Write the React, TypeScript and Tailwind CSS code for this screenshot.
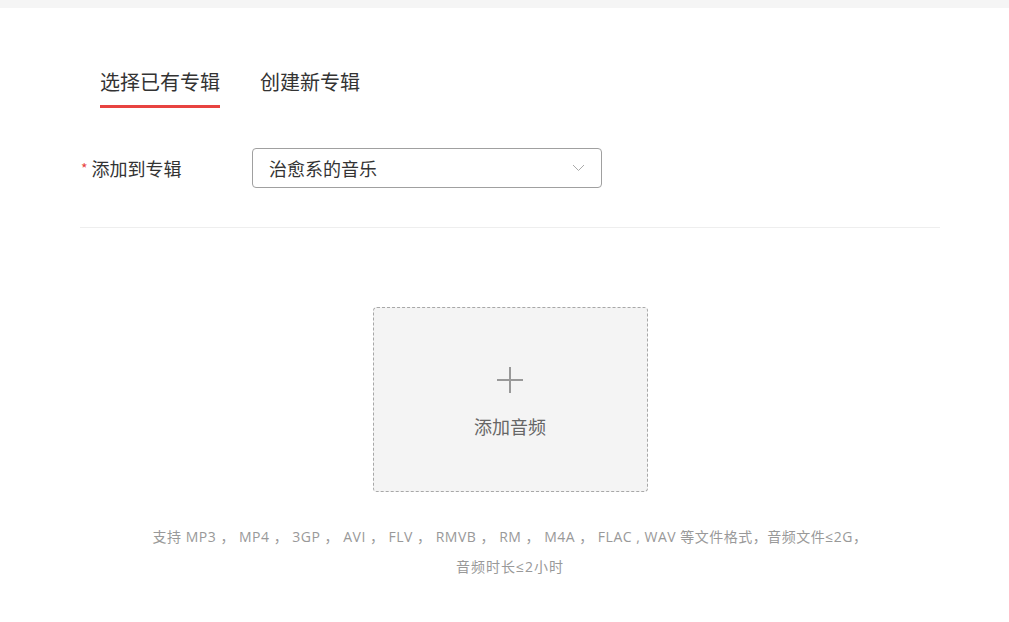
import React, { useState } from "react";

const font = "font-['Microsoft_YaHei','Noto_Sans_CJK_SC',sans-serif]";

export default function App() {
  const [tab, setTab] = useState(0);
  const tabs = ["选择已有专辑", "创建新专辑"];

  return (
    <div className={`${font} min-h-[622px] bg-white text-[#333]`}>
      <div className="h-2 bg-[#f5f5f5]" />
      <div className="w-[860px] ml-20">
        {/* tabs */}
        <div className="flex gap-10 pl-5 mt-[60px]">
          {tabs.map((t, i) => (
            <button key={t} onClick={() => setTab(i)} className="flex flex-col items-stretch">
              <span className="text-[20px] leading-[28px]">{t}</span>
              <span className={i === tab ? "mt-[9px] h-[3px] bg-[#e84340]" : "mt-[9px] h-[3px]"} />
            </button>
          ))}
        </div>

        {/* album select */}
        <div className="flex items-center mt-10 h-10">
          <div className="w-[172px] flex items-center text-[18px]">
            <span className="text-[#e84340] text-[14px] mr-1 ml-px">*</span>
            添加到专辑
          </div>
          <div className="w-[350px] h-10 border border-[#a0a0a0] rounded flex items-center justify-between pl-4 pr-4 text-[18px]">
            <span>治愈系的音乐</span>
            <svg width="13" height="8" viewBox="0 0 13 8" fill="none">
              <path d="M1 1l5.5 5.5L12 1" stroke="#aaa" strokeWidth="1" />
            </svg>
          </div>
        </div>

        <div className="mt-[39px] border-t border-[#eee]" />

        {/* upload */}
        <div className="flex flex-col items-center">
          <div className="mt-[79px] w-[275px] h-[185px] bg-[#f4f4f4] border border-dashed border-[#a8a8a8] rounded flex flex-col items-center">
            <svg className="mt-[59px]" width="26" height="26" viewBox="0 0 26 26">
              <path d="M13 0v26M0 13h26" stroke="#999" strokeWidth="2" />
            </svg>
            <div className="mt-[20px] text-[18px] text-[#666] leading-[26px]">添加音频</div>
          </div>
          <div className="mt-[30px] font-['Open_Sans','Noto_Sans_CJK_SC',sans-serif] text-[14px] leading-[30px] tracking-[0.5px] text-[#999] text-center whitespace-pre">
            {"支持 MP3 ， MP4 ， 3GP ， AVI ， FLV ， RMVB ， RM ， M4A ， FLAC , WAV 等文件格式，音频文件≤2G，"}
            <br />
            <span className="tracking-[1px]">{"音频时长≤2小时"}</span>
          </div>
        </div>
      </div>
    </div>
  );
}
